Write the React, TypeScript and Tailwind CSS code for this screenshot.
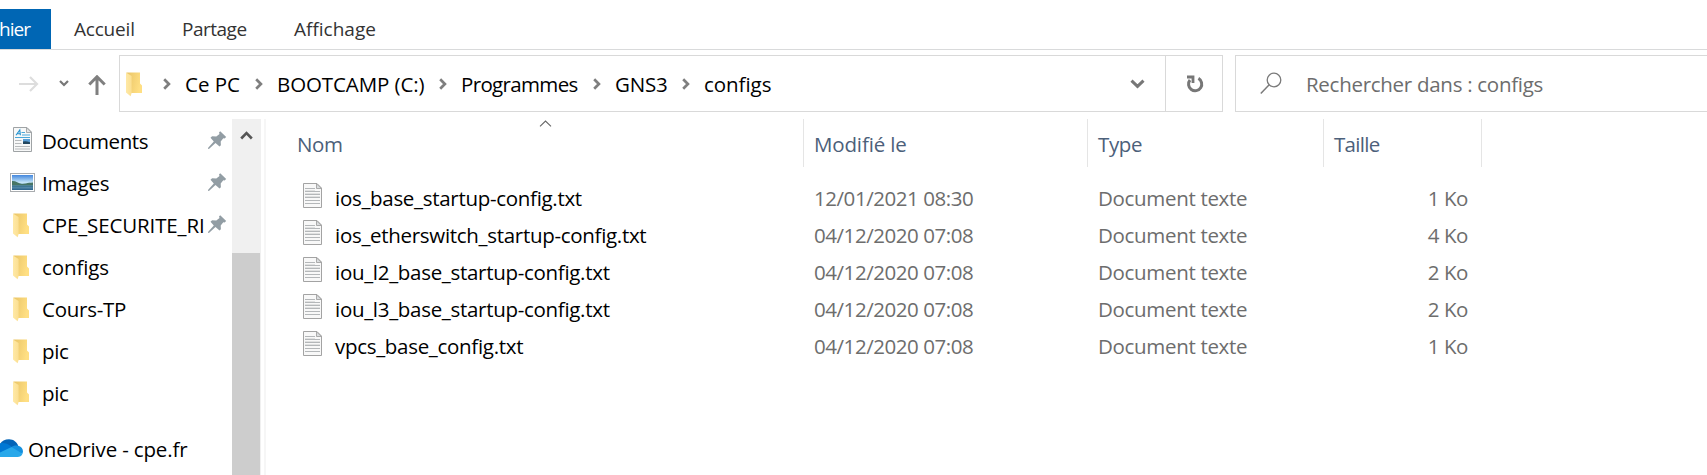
import type { ReactNode } from "react";

function FolderIcon() {
  return (
    <svg width="17" height="25" viewBox="0 0 17 25" className="block shrink-0">
      <defs>
        <linearGradient id="folderBack" x1="0" y1="0" x2="1" y2="0.3">
          <stop offset="0" stopColor="#e9c467" />
          <stop offset="1" stopColor="#ffdf83" />
        </linearGradient>
        <linearGradient id="folderFront" x1="0" y1="0" x2="1" y2="0">
          <stop offset="0" stopColor="#ffe9a6" />
          <stop offset="1" stopColor="#fbdf92" />
        </linearGradient>
      </defs>
      <path d="M0.5 0.5H14V11.5L16 13.5V21H5L0.5 20Z" fill="url(#folderBack)" />
      <path d="M0 0.5L5.6 4V21L4.6 24.3L0 20.5Z" fill="url(#folderFront)" />
    </svg>
  );
}

function TextFileIcon() {
  return (
    <svg width="20" height="26" viewBox="0 0 20 26" className="block shrink-0">
      <path d="M0.5 0.5H14L18.5 5V24.5H0.5Z" fill="#f8f8f8" stroke="#a3a3a3" />
      <path d="M13.5 0.8V5.5H18.5Z" fill="#dcdfe1" stroke="#a3a3a3" strokeWidth="0.9" />
      <path d="M2 5.5H12M2 8.5H17M2 11.5H17M2 14.5H17M2 17.5H17M2 20.5H17" stroke="#b4b7b9" />
      <path d="M2 7.5H12M2 10.5H17M2 13.5H17" stroke="#e0e1e1" />
    </svg>
  );
}

function DocumentsIcon() {
  return (
    <svg width="20" height="26" viewBox="0 0 20 26" className="block shrink-0">
      <path d="M0.5 0.5H14L18.5 5V24.5H0.5Z" fill="#f7f8f8" stroke="#9fa3a5" />
      <path d="M13.5 0.8V5.5H18.5Z" fill="#e6e8e9" stroke="#9fa3a5" strokeWidth="0.9" />
      <path d="M3 8.3L6.8 3L7.4 8.3M4.4 6.7H7" fill="none" stroke="#2492cf" strokeWidth="1.1" />
      <path d="M8.5 5.5H12M9 8H17M2 10.5H17" stroke="#49a7d9" />
      <path d="M2 13.5H8.5M2 16.5H8.5M2 19.5H17M2 22H17" stroke="#b7babc" />
      <rect x="10" y="12" width="7" height="5" fill="#5a9ed6" />
      <path d="M10 14.5Q12.5 13.5 17 15.2V17H10Z" fill="#23475f" />
    </svg>
  );
}

function PicturesIcon() {
  return (
    <svg width="25" height="19" viewBox="0 0 25 19" className="block shrink-0">
      <defs>
        <linearGradient id="sky" x1="0" y1="0" x2="0" y2="1">
          <stop offset="0" stopColor="#4387dd" />
          <stop offset="0.5" stopColor="#c4e4f7" />
          <stop offset="0.65" stopColor="#87b5cc" />
          <stop offset="1" stopColor="#296089" />
        </linearGradient>
      </defs>
      <rect x="0.5" y="0.5" width="24" height="18" fill="#fff" stroke="#a9acaf" />
      <rect x="2" y="2" width="21" height="15" fill="url(#sky)" />
      <path d="M2 8C6 7.8 8 10 12 11L16 10.6C18 10 20 9.8 23 9.6V12.5H2Z" fill="#477565" />
      <path d="M2 12.4H23V14.5C15 13.4 9 15 2 14Z" fill="#3f7794" />
    </svg>
  );
}

function CloudIcon() {
  return (
    <svg width="23" height="19" viewBox="0 0 23 19" className="block shrink-0">
      <path d="M0 5C1.5 1.8 5 0.2 9 0.2C13.5 0.2 17 3 18.2 7L9 10L0 5Z" fill="#0364b8" />
      <path d="M0 4.4C4 3.4 7 4.4 11.5 7.5L4 17L0 18Z" fill="#0078d4" />
      <path d="M11.5 8C14 6.5 16 6.4 18.2 6.8C21 7.6 23 9.6 23 12.5L22.5 14.8L15 13Z" fill="#1490df" />
      <path d="M0 13.5L11.5 8L22.5 14.8C21.6 17 19.8 18 17.5 18H0Z" fill="#28a8ea" />
    </svg>
  );
}

function PinIcon() {
  return (
    <svg width="19" height="19" viewBox="0 0 19 19" className="block shrink-0">
      <path
        d="M12.2 0.3L18.2 6.1L16.6 7.4L15.3 7.2L12.7 10.4L12.9 14.2L11.5 15.6L7.5 12.1L1.2 17.8L0 17.9L0.2 16.7L5.8 10.4L2.5 6.7L4.1 5.3L8.3 5.4L11.5 2.9L11 1.5Z"
        fill="#929da4"
      />
    </svg>
  );
}

function CrumbChevron() {
  return (
    <svg width="8" height="12" viewBox="0 0 8 12" className="mr-[14px] block shrink-0">
      <path d="M1.2 1.3L5.9 6L1.2 10.7" fill="none" stroke="#7f7f7f" strokeWidth="2.7" />
    </svg>
  );
}

const crumbs = [
  { label: "Ce PC", box: "w-[92px]", text: "tracking-normal" },
  { label: "BOOTCAMP (C:)", box: "w-[184px]", text: "tracking-[-0.1px]" },
  { label: "Programmes", box: "w-[154px]", text: "tracking-[-0.65px]" },
  { label: "GNS3", box: "w-[89px]", text: "tracking-[-0.2px]" },
  { label: "configs", box: "w-[120px]", text: "tracking-[-0.05px]" },
];

const places: { label: string; icon: ReactNode; iconBox: string; pinned?: boolean; text: string }[] = [
  { label: "Documents", icon: <DocumentsIcon />, iconBox: "mb-0.5 pl-[13px]", pinned: true, text: "tracking-[-0.4px]" },
  { label: "Images", icon: <PicturesIcon />, iconBox: "mb-0.5 pl-[10px]", pinned: true, text: "tracking-[-0.2px]" },
  { label: "CPE_SECURITE_RI", icon: <FolderIcon />, iconBox: "pl-[13px]", pinned: true, text: "tracking-[-0.13px]" },
  { label: "configs", icon: <FolderIcon />, iconBox: "pl-[13px]", text: "tracking-[-0.1px]" },
  { label: "Cours-TP", icon: <FolderIcon />, iconBox: "pl-[13px]", text: "tracking-[-0.25px]" },
  { label: "pic", icon: <FolderIcon />, iconBox: "pl-[13px]", text: "tracking-[-0.3px]" },
  { label: "pic", icon: <FolderIcon />, iconBox: "pl-[13px]", text: "tracking-[-0.3px]" },
];

const files = [
  { name: "ios_base_startup-config.txt", date: "12/01/2021 08:30", size: "1 Ko" },
  { name: "ios_etherswitch_startup-config.txt", date: "04/12/2020 07:08", size: "4 Ko" },
  { name: "iou_l2_base_startup-config.txt", date: "04/12/2020 07:08", size: "2 Ko" },
  { name: "iou_l3_base_startup-config.txt", date: "04/12/2020 07:08", size: "2 Ko" },
  { name: "vpcs_base_config.txt", date: "04/12/2020 07:08", size: "1 Ko" },
];

function Ribbon() {
  return (
    <nav className="flex h-[50px] items-stretch border-b border-[#d9dadb] pt-[9px] text-[19px] text-[#333333]">
      <div className="flex w-[51px] items-center justify-end bg-[#0066b4] pr-[21px] tracking-[-1px] text-white">
        hier
      </div>
      <div className="flex w-[109px] items-center pl-[23px] tracking-[-0.2px]">Accueil</div>
      <div className="flex w-[112px] items-center pl-[22px] tracking-[-0.5px]">Partage</div>
      <div className="flex items-center pl-[22px] tracking-normal">Affichage</div>
    </nav>
  );
}

function AddressBar() {
  return (
    <div className="flex h-[69px] shrink-0 pt-[5px]">
      <div className="flex h-[57px] w-[119px] shrink-0 items-center">
        <svg width="20" height="16" viewBox="0 0 20 16" className="ml-[19px] block">
          <path d="M0 8H17.5M11 1L18 8L11 15" fill="none" stroke="#dddddd" strokeWidth="2.2" />
        </svg>
        <svg width="10" height="7" viewBox="0 0 10 7" className="ml-5 block">
          <path d="M1 1L5 5L9 1" fill="none" stroke="#777777" strokeWidth="2.2" />
        </svg>
        <svg width="18" height="20" viewBox="0 0 18 20" className="ml-[19px] mt-[3px] block">
          <path d="M9 20V2.5M1.3 9.5L9 1.8L16.7 9.5" fill="none" stroke="#7f7f7f" strokeWidth="3" />
        </svg>
      </div>
      <div className="flex h-[57px] w-[1104px] shrink-0 items-center border border-[#d9d9d9]">
        <div className="ml-[6px] mr-5 mt-px">
          <FolderIcon />
        </div>
        {crumbs.map((c) => (
          <div key={c.label} className={`flex shrink-0 items-center text-black ${c.box}`}>
            <CrumbChevron />
            <span className={`whitespace-nowrap ${c.text}`}>{c.label}</span>
          </div>
        ))}
        <svg width="15" height="10" viewBox="0 0 15 10" className="ml-auto mr-5 block">
          <path d="M1.5 1.6L7.5 7.4L13.5 1.6" fill="none" stroke="#777777" strokeWidth="3" />
        </svg>
        <div className="flex h-full w-[57px] items-center border-l border-[#d9d9d9] pl-5">
          <svg width="18" height="18" viewBox="0 0 18 18" className="block">
            <path d="M12.4 3.4A6.6 6.6 0 1 1 4 5" fill="none" stroke="#777777" strokeWidth="3" />
            <path d="M1 0.6H8.4V8H5.6V3.4H1Z" fill="#777777" />
          </svg>
        </div>
      </div>
      <div className="ml-3 flex h-[57px] flex-1 items-center border border-r-0 border-[#d9d9d9]">
        <svg width="23" height="23" viewBox="0 0 23 23" className="ml-6 block shrink-0">
          <circle cx="14" cy="8" r="6.8" fill="none" stroke="#7a7a7a" strokeWidth="1.3" />
          <path d="M9.2 12.8L0.8 21.4" stroke="#7a7a7a" strokeWidth="1.5" />
        </svg>
        <span className="ml-[23px] whitespace-nowrap tracking-[-0.28px] text-[#6d6d6d]">
          Rechercher dans : configs
        </span>
      </div>
    </div>
  );
}

function Sidebar() {
  return (
    <aside className="flex w-[266px] shrink-0 border-r-2 border-[#f6f6f6]">
      <div className="w-[232px] shrink-0 pt-px text-black">
        {places.map((p, i) => (
          <div key={i} className="flex h-[42px] items-center">
            <div className={`w-[42px] shrink-0 ${p.iconBox}`}>{p.icon}</div>
            <span className={`w-[162px] overflow-hidden whitespace-nowrap ${p.text}`}>{p.label}</span>
            {p.pinned && (
              <div className="mb-0.5 ml-1">
                <PinIcon />
              </div>
            )}
          </div>
        ))}
        <div className="mt-[14px] flex h-[42px] items-center">
          <div className="mb-0.5">
            <CloudIcon />
          </div>
          <span className="ml-[5px] whitespace-nowrap tracking-[-0.15px]">OneDrive - cpe.fr</span>
        </div>
      </div>
      <div className="flex w-[29px] flex-col bg-[#f0f0f0]">
        <div className="flex h-[134px] shrink-0 justify-center pt-3">
          <svg width="13" height="9" viewBox="0 0 13 9" className="block">
            <path d="M1.2 7.5L6.5 2L11.8 7.5" fill="none" stroke="#555555" strokeWidth="2.6" />
          </svg>
        </div>
        <div className="w-7 flex-1 bg-[#cdcdcd]" />
      </div>
    </aside>
  );
}

function FileList() {
  return (
    <main className="flex-1">
      <div className="flex h-12 text-[#4c607a]">
        <div className="relative flex w-[538px] items-center border-r border-[#e5e5e5] pl-[31px] pt-0.5 tracking-[-0.4px]">
          Nom
          <svg width="13" height="7" viewBox="0 0 13 7" className="absolute left-[273px] top-px block">
            <path d="M1 6.3L6.5 1L12 6.3" fill="none" stroke="#666666" strokeWidth="1.1" />
          </svg>
        </div>
        <div className="flex w-[284px] items-center border-r border-[#e5e5e5] pl-[10px] pt-0.5 tracking-[-0.15px]">
          Modifié le
        </div>
        <div className="flex w-[236px] items-center border-r border-[#e5e5e5] pl-[10px] pt-0.5 tracking-[-0.4px]">
          Type
        </div>
        <div className="flex w-[158px] items-center border-r border-[#e5e5e5] pl-[10px] pt-0.5 tracking-[-0.7px]">
          Taille
        </div>
      </div>
      <div className="pt-3">
        {files.map((f) => (
          <div key={f.name} className="flex h-[37px] items-center whitespace-nowrap text-[#6d6d6d]">
            <div className="mb-1 ml-[37px] w-[32px] shrink-0">
              <TextFileIcon />
            </div>
            <span className="w-[479px] tracking-[-0.3px] text-black">{f.name}</span>
            <span className="w-[284px] tracking-[-0.45px]">{f.date}</span>
            <span className="w-[235px] tracking-[-0.32px]">Document texte</span>
            <span className="w-[135px] text-right tracking-[-0.4px]">{f.size}</span>
          </div>
        ))}
      </div>
    </main>
  );
}

export default function App() {
  return (
    <div className="flex h-[475px] w-[1707px] flex-col overflow-hidden bg-white font-['Open_Sans','Noto_Sans',sans-serif] text-[20.5px] leading-7">
      <Ribbon />
      <AddressBar />
      <div className="flex min-h-0 flex-1">
        <Sidebar />
        <FileList />
      </div>
    </div>
  );
}
